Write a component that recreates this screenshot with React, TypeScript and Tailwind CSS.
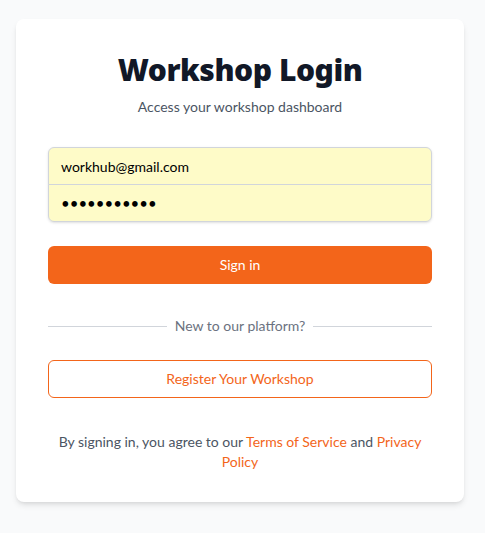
import { useState } from 'react';

export default function App() {
  const [email, setEmail] = useState('workhub@gmail.com');
  const [password, setPassword] = useState('workhub1234');

  return (
    <main className="min-h-screen bg-[#f9fafb] px-4 pt-[19px] font-['Segoe_UI','Lato',sans-serif]">
      <div className="w-[448px] bg-white rounded-lg shadow-md px-8 pt-[32px] pb-[30px]">
        <h1 className="text-center font-['Segoe_UI','Noto_Sans',sans-serif] text-3xl font-black tracking-[-0.015em] text-[#111827] leading-[38px]">
          Workshop Login
        </h1>
        <p className="mt-2 text-center text-sm text-[#4b5563]">Access your workshop dashboard</p>

        <form className="mt-[30px]" onSubmit={(e) => e.preventDefault()}>
          <div className="-space-y-px rounded-md shadow-sm">
            <input
              type="email"
              autoFocus
              value={email}
              onChange={(e) => setEmail(e.target.value)}
              className="block h-[38px] w-full rounded-t-md border border-[#d1d5db] bg-[#fefbc8] px-3 text-sm text-black outline-none caret-black"
            />
            <input
              type="password"
              value={password}
              onChange={(e) => setPassword(e.target.value)}
              className="block h-[38px] w-full rounded-b-md border border-[#d1d5db] bg-[#fefbc8] px-3 text-[15px] text-black outline-none"
            />
          </div>

          <button className="mt-6 h-[38px] w-full rounded-md bg-[#f3651a] text-sm text-white">Sign in</button>
        </form>

        <div className="mt-8 flex items-center gap-2">
          <div className="h-px flex-1 bg-[#d1d5db]" />
          <span className="text-sm text-[#6b7280]">New to our platform?</span>
          <div className="h-px flex-1 bg-[#d1d5db]" />
        </div>

        <button className="mt-6 h-[38px] w-full rounded-md border border-[#f3651a] bg-white text-sm text-[#f3651a]">
          Register Your Workshop
        </button>

        <p className="mt-[34px] text-center text-sm text-[#4b5563]">
          By signing in, you agree to our <a className="text-[#f3651a]">Terms of Service</a> and{' '}
          <a className="text-[#f3651a]">Privacy Policy</a>
        </p>
      </div>
    </main>
  );
}
